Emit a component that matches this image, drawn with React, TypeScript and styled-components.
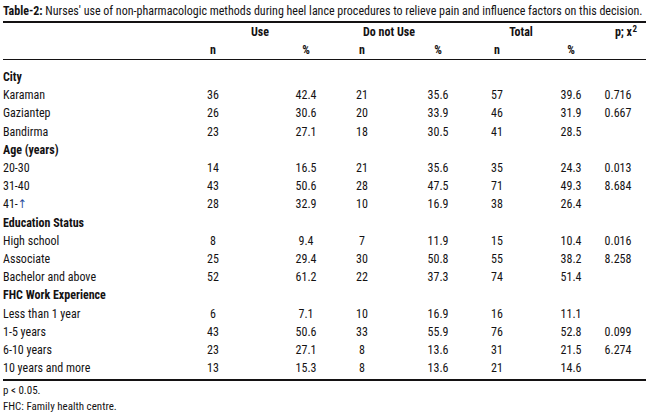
import React from "react";
import styled, { createGlobalStyle } from "styled-components";

const GlobalStyle = createGlobalStyle`
  html, body { margin: 0; padding: 0; background: #fff; }
  body {
    font-family: "Roboto", "Liberation Sans", sans-serif;
    font-stretch: 75%;
    color: #141213;
  }
`;

/* label | n | gap | % | gap | n | gap | % | gap | n | gap | % | gap | p */
const DATA_COLS =
  "188px 44px 49px 44px 12px 44px 32px 44px 15px 44px 30px 44px 3px 44px 1fr";
/* label | Use | gap | Do not Use | gap | Total | gap | p; x2 */
const GROUP_COLS = "217px 80px 49px 80px 52px 80px 45px 40px";

const Page = styled.div`
  width: 643px;
  padding: 3px 0 0 3px;
`;

const Title = styled.div`
  font-size: 12px;
  line-height: 16px;
  white-space: nowrap;
  b { font-weight: 700; }
`;

const TableBox = styled.div`
  margin-top: 2px;
  border-top: 2px solid #141213;
  border-bottom: 2px solid #141213;
`;

const Head = styled.div`
  border-bottom: 1.5px solid #141213;
`;

const GroupRow = styled.div`
  display: grid;
  grid-template-columns: ${GROUP_COLS};
  height: 18px;
  align-items: center;
  font-size: 12px;
  font-weight: 700;
`;

const DataRow = styled.div`
  display: grid;
  grid-template-columns: ${DATA_COLS};
  height: 18.2px;
  align-items: center;
  font-size: 12px;
`;

const SubHeadRow = styled(DataRow)`
  height: 18px;
  font-weight: 700;
`;

const Body = styled.div`
  padding: 8px 0 2px;
`;

const Cell = styled.div<{ $col: number }>`
  grid-column: ${(p) => p.$col};
  text-align: center;
  white-space: nowrap;
`;

const Label = styled.div`
  grid-column: 1;
  text-align: left;
  white-space: nowrap;
`;

const Section = styled.div`
  height: 18.2px;
  line-height: 18.2px;
  font-size: 12px;
  font-weight: 700;
`;

const Sup = styled.sup`
  font-size: 9px;
  line-height: 0;
  vertical-align: 4px;
  margin-left: 0.5px;
`;

const Arrow = styled.span`
  color: #1f4a9a;
  font-family: "Roboto", "DejaVu Sans", sans-serif;
  font-stretch: 75%;
  font-size: 12px;
`;

const Notes = styled.div`
  padding-top: 2px;
  font-size: 11px;
  line-height: 16px;
`;

type Row = { label: React.ReactNode; v: string[] };
type Group = { title: string; rows: Row[] };

const groups: Group[] = [
  {
    title: "City",
    rows: [
      { label: "Karaman", v: ["36", "42.4", "21", "35.6", "57", "39.6", "0.716"] },
      { label: "Gaziantep", v: ["26", "30.6", "20", "33.9", "46", "31.9", "0.667"] },
      { label: "Bandirma", v: ["23", "27.1", "18", "30.5", "41", "28.5", ""] },
    ],
  },
  {
    title: "Age (years)",
    rows: [
      { label: "20-30", v: ["14", "16.5", "21", "35.6", "35", "24.3", "0.013"] },
      { label: "31-40", v: ["43", "50.6", "28", "47.5", "71", "49.3", "8.684"] },
      { label: <>41-<Arrow>↑</Arrow></>, v: ["28", "32.9", "10", "16.9", "38", "26.4", ""] },
    ],
  },
  {
    title: "Education Status",
    rows: [
      { label: "High school", v: ["8", "9.4", "7", "11.9", "15", "10.4", "0.016"] },
      { label: "Associate", v: ["25", "29.4", "30", "50.8", "55", "38.2", "8.258"] },
      { label: "Bachelor and above", v: ["52", "61.2", "22", "37.3", "74", "51.4", ""] },
    ],
  },
  {
    title: "FHC Work Experience",
    rows: [
      { label: "Less than 1 year", v: ["6", "7.1", "10", "16.9", "16", "11.1", ""] },
      { label: "1-5 years", v: ["43", "50.6", "33", "55.9", "76", "52.8", "0.099"] },
      { label: "6-10 years", v: ["23", "27.1", "8", "13.6", "31", "21.5", "6.274"] },
      { label: "10 years and more", v: ["13", "15.3", "8", "13.6", "21", "14.6", ""] },
    ],
  },
];

const dataCol = (j: number) => 2 * j + 2;
const subHeads = ["n", "%", "n", "%", "n", "%"];

export default function App() {
  return (
    <>
      <GlobalStyle />
      <Page>
        <Title>
          <b>Table-2:</b> Nurses' use of non-pharmacologic methods during heel lance procedures to relieve pain and influence factors on this decision.
        </Title>
        <TableBox>
          <Head>
            <GroupRow>
              <Cell $col={2}>Use</Cell>
              <Cell $col={4}>Do not Use</Cell>
              <Cell $col={6}>Total</Cell>
              <Cell $col={8}>
                p; x<Sup>2</Sup>
              </Cell>
            </GroupRow>
            <SubHeadRow>
              {subHeads.map((h, j) => (
                <Cell key={j} $col={dataCol(j)}>
                  {h}
                </Cell>
              ))}
            </SubHeadRow>
          </Head>
          <Body>
            {groups.map((g) => (
              <React.Fragment key={g.title}>
                <Section>{g.title}</Section>
                {g.rows.map((r, i) => (
                  <DataRow key={i}>
                    <Label>{r.label}</Label>
                    {r.v.map((x, j) => (
                      <Cell key={j} $col={dataCol(j)}>
                        {x}
                      </Cell>
                    ))}
                  </DataRow>
                ))}
              </React.Fragment>
            ))}
          </Body>
        </TableBox>
        <Notes>
          <div>p &lt; 0.05.</div>
          <div>FHC: Family health centre.</div>
        </Notes>
      </Page>
    </>
  );
}
